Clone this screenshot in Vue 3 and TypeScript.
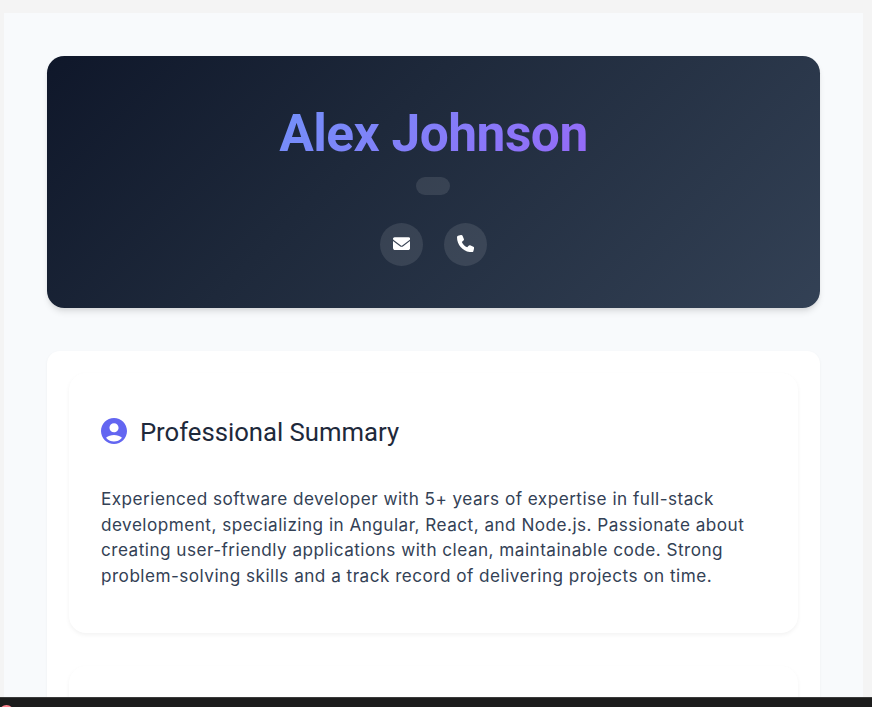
<script setup lang="ts">
interface Contact {
  label: string
  path: string
}

const name = 'Alex Johnson'

const contacts: Contact[] = [
  {
    label: 'Email',
    path: 'M48 64C21.5 64 0 85.5 0 112c0 15.1 7.1 29.3 19.2 38.4L236.8 313.6c11.4 8.5 27 8.5 38.4 0L492.8 150.4c12.1-9.1 19.2-23.3 19.2-38.4c0-26.5-21.5-48-48-48H48zM0 176V384c0 35.3 28.7 64 64 64H448c35.3 0 64-28.7 64-64V176L294.4 339.2c-22.8 17.1-54 17.1-76.8 0L0 176z',
  },
  {
    label: 'Phone',
    path: 'M164.9 24.6c-7.7-18.6-28-28.5-47.4-23.2l-88 24C12.1 30.2 0 46 0 64C0 311.4 200.6 512 448 512c18 0 33.8-12.1 38.6-29.5l24-88c5.3-19.4-4.6-39.7-23.2-47.4l-96-40c-16.3-6.8-35.2-2.1-46.3 11.6L304.7 368C234.3 334.7 177.3 277.7 144 207.3L193.3 167c13.7-11.2 18.4-30 11.6-46.3l-40-96z',
  },
]

const summary =
  'Experienced software developer with 5+ years of expertise in full-stack development, specializing in Angular, React, and Node.js. Passionate about creating user-friendly applications with clean, maintainable code. Strong problem-solving skills and a track record of delivering projects on time.'
</script>

<template>
  <div class="screen">
    <div class="page">
      <header class="hero">
        <h1 class="name">{{ name }}</h1>
        <div class="role"></div>
        <nav class="contacts">
          <a v-for="c in contacts" :key="c.label" class="contact" :aria-label="c.label">
            <svg viewBox="0 0 512 512"><path :d="c.path" /></svg>
          </a>
        </nav>
      </header>
      <main class="content">
        <section class="card">
          <h2 class="heading">
            <svg class="avatar" viewBox="2 2 20 20">
              <path
                d="M12 2C6.48 2 2 6.48 2 12s4.48 10 10 10 10-4.48 10-10S17.52 2 12 2zm0 4c1.93 0 3.5 1.57 3.5 3.5S13.93 13 12 13s-3.5-1.57-3.5-3.5S10.07 6 12 6zm0 14c-2.03 0-4.43-.82-6.14-2.88C7.55 15.8 9.68 15 12 15s4.45.8 6.14 2.12C16.43 19.18 14.03 20 12 20z"
              />
            </svg>
            <span class="heading-text">Professional Summary</span>
          </h2>
          <p class="summary">{{ summary }}</p>
        </section>
        <section class="card next"></section>
      </main>
    </div>
    <footer class="taskbar"><span class="dot"></span></footer>
  </div>
</template>

<style>
body {
  margin: 0;
  overflow: hidden;
}
</style>

<style scoped>
.screen {
  display: flex;
  flex-direction: column;
  box-sizing: border-box;
  height: 707px;
  padding-top: 13px;
  overflow: hidden;
  background: #f4f4f4;
}
.page {
  flex: 1;
  min-height: 0;
  box-sizing: border-box;
  margin: 0 9px 0 4px;
  padding: 42.7px 43.4px 0 43.3px;
  overflow: hidden;
  background: #f8fafc;
}
.hero {
  display: flex;
  flex-direction: column;
  align-items: center;
  box-sizing: border-box;
  height: 252.6px;
  padding: 44px 42.9px 0;
  border-radius: 17.2px;
  background: linear-gradient(135deg, #0f172a 0%, #1e293b 40%, #334155 100%);
  box-shadow: 0 4.3px 6.4px -1px rgba(0, 0, 0, 0.1), 0 2px 4.3px -1px rgba(0, 0, 0, 0.06);
}
.name {
  align-self: stretch;
  margin: 0;
  font: 700 51.5px/68px Roboto, sans-serif;
  letter-spacing: -0.536px;
  text-align: center;
  color: transparent;
  background: linear-gradient(135deg, #60a5fa, #a855f7);
  -webkit-background-clip: text;
  background-clip: text;
}
.role {
  width: 34px;
  height: 17.2px;
  margin-top: 9.7px;
  border-radius: 9px;
  background: rgba(255, 255, 255, 0.1);
}
.contacts {
  display: flex;
  gap: 21.5px;
  margin-top: 28.4px;
}
.contact {
  display: grid;
  place-items: center;
  width: 42.9px;
  height: 42.9px;
  border-radius: 50%;
  background: rgba(255, 255, 255, 0.1);
}
.contact svg {
  width: 17.2px;
  height: 17.2px;
  margin-bottom: 2px;
  fill: #fff;
}
.content {
  box-sizing: border-box;
  height: 500px;
  margin-top: 42.9px;
  padding: 21.5px;
  border-radius: 12.9px;
  background: #fff;
  box-shadow: 0 1px 3px rgba(0, 0, 0, 0.05);
}
.card {
  box-sizing: border-box;
  height: 260.8px;
  padding: 41.4px 32.2px 0;
  border-radius: 17.2px;
  background: #fff;
  box-shadow: 0 2px 4.3px rgba(0, 0, 0, 0.05);
}
.next {
  margin-top: 32.2px;
}
.heading {
  display: flex;
  align-items: center;
  gap: 12.9px;
  height: 34px;
  margin: 0;
  font: 400 25.7px/34px Roboto, sans-serif;
  color: #1e293b;
}
.heading-text {
  padding-top: 2px;
}
.avatar {
  width: 26px;
  height: 26px;
  fill: #6366f1;
}
.summary {
  margin: 37.8px 0 0;
  font: 400 17.16px/25.74px Inter, sans-serif;
  letter-spacing: 0.475px;
  color: #334155;
}
.taskbar {
  position: relative;
  flex: none;
  box-sizing: border-box;
  height: 10px;
  overflow: hidden;
  border-top: 1px solid #3b3b3b;
  background: #1c1c1c;
}
.dot {
  position: absolute;
  top: 7px;
  left: -1px;
  width: 15px;
  height: 15px;
  border-radius: 50%;
  background: #ff858f;
}
</style>
